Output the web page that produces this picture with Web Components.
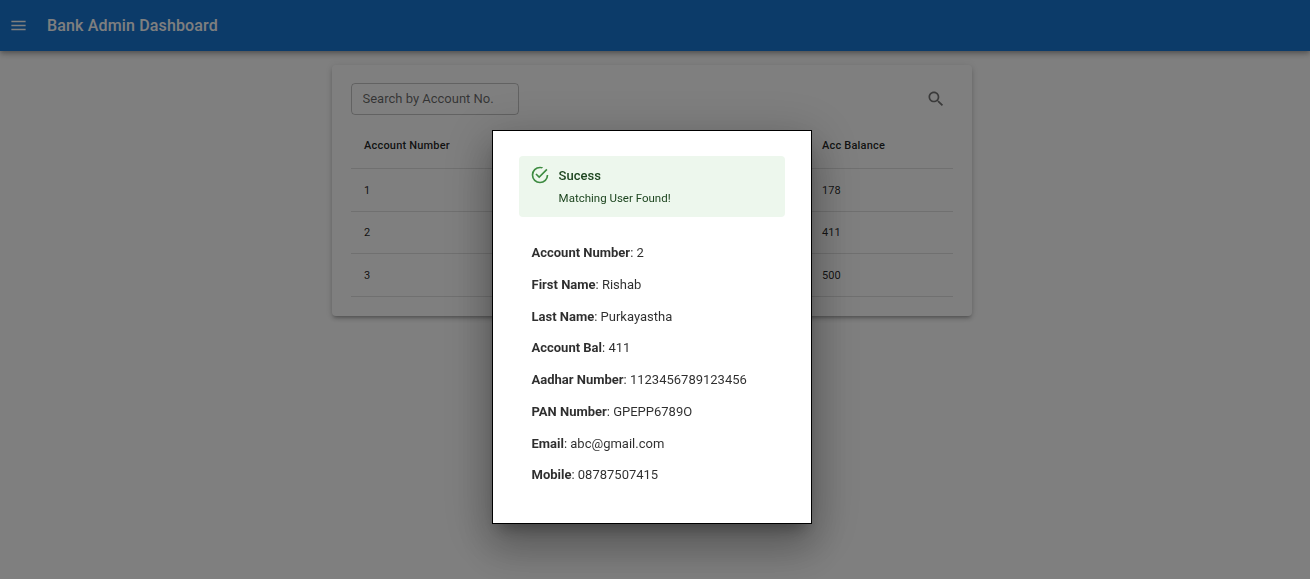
<!DOCTYPE html>
<html>
<head>
<meta charset="utf-8">
<title>Bank Admin Dashboard</title>
<style>
    html, body { margin: 0; height: 100%; }
    body { font-family: Roboto, "Liberation Sans", sans-serif; background: #fff; color: rgba(0,0,0,.87); overflow: hidden; }
</style>
</head>
<body>
<bank-app-bar>Bank Admin Dashboard</bank-app-bar>
<account-card>
    <account-row slot="rows" head number="Account Number" balance="Acc Balance"></account-row>
    <account-row slot="rows" number="1" balance="178"></account-row>
    <account-row slot="rows" number="2" balance="411"></account-row>
    <account-row slot="rows" number="3" balance="500"></account-row>
</account-card>
<user-modal>
    <success-alert slot="alert" heading="Sucess">Matching User Found!</success-alert>
    <detail-line label="Account Number" value="2"></detail-line>
    <detail-line label="First Name" value="Rishab"></detail-line>
    <detail-line label="Last Name" value="Purkayastha"></detail-line>
    <detail-line label="Account Bal" value="411"></detail-line>
    <detail-line label="Aadhar Number" value="1123456789123456"></detail-line>
    <detail-line label="PAN Number" value="GPEPP6789O"></detail-line>
    <detail-line label="Email" value="abc@gmail.com"></detail-line>
    <detail-line label="Mobile" value="08787507415"></detail-line>
</user-modal>

<script>
/**
 * Top application bar
 */
class BankAppBar extends HTMLElement {
    connectedCallback() {
        this.attachShadow({ mode: 'open' });
        this.shadowRoot.innerHTML = `
            <style>
                :host {
                    display: flex;
                    align-items: center;
                    height: 51px;
                    padding-left: 9px;
                    background: #1976d2;
                    color: #fff;
                    box-shadow: 0 2px 4px -1px rgba(0,0,0,.2), 0 4px 5px 0 rgba(0,0,0,.14), 0 1px 10px 0 rgba(0,0,0,.12);
                }
                svg { width: 19px; height: 19px; fill: currentColor; flex: none; }
                h1 { margin: 0 0 0 19px; font-size: 16px; font-weight: 500; line-height: 1; letter-spacing: .15px; }
            </style>
            <svg viewBox="0 0 24 24"><path d="M3 18h18v-2H3v2zm0-5h18v-2H3v2zm0-7v2h18V6H3z"/></svg>
            <h1><slot></slot></h1>
        `;
    }
}

/**
 * Card holding the search field and the accounts table
 */
class AccountCard extends HTMLElement {
    connectedCallback() {
        this.attachShadow({ mode: 'open' });
        this.shadowRoot.innerHTML = `
            <style>
                :host {
                    display: block;
                    box-sizing: border-box;
                    width: 640px;
                    height: 251px;
                    margin: 14px 0 0 332px;
                    padding: 18px 19px 0;
                    border-radius: 4px;
                    background: #fff;
                    box-shadow: 0 3px 3px -2px rgba(0,0,0,.2), 0 3px 4px 0 rgba(0,0,0,.14), 0 1px 8px 0 rgba(0,0,0,.12);
                }
                .search { display: flex; align-items: center; justify-content: space-between; padding-right: 7px; }
                input {
                    box-sizing: border-box;
                    width: 168px;
                    height: 32px;
                    padding: 0 10px 2px 10.5px;
                    border: 1px solid rgba(0,0,0,.23);
                    border-radius: 4px;
                    background: transparent;
                    font: 400 13px Roboto, sans-serif;
                    color: rgba(0,0,0,.87);
                    outline: none;
                }
                input::placeholder { color: rgba(0,0,0,.6); opacity: 1; }
                svg { width: 20px; height: 20px; fill: rgba(0,0,0,.54); display: block; margin: .6px -.2px 0 0; }
            </style>
            <div class="search">
                <input type="text" placeholder="Search by Account No.">
                <svg viewBox="0 0 24 24"><path d="M15.5 14h-.79l-.28-.27C15.41 12.59 16 11.11 16 9.5 16 5.91 13.09 3 9.5 3S3 5.91 3 9.5 5.91 16 9.5 16c1.61 0 3.09-.59 4.23-1.57l.27.28v.79l5 4.99L20.49 19l-4.99-5zm-6 0C7.01 14 5 11.99 5 9.5S7.01 5 9.5 5 14 7.01 14 9.5 11.99 14 9.5 14z"/></svg>
            </div>
            <slot name="rows"></slot>
        `;
    }
}

/**
 * One table row, head attribute makes it the header row
 */
class AccountRow extends HTMLElement {
    connectedCallback() {
        this.attachShadow({ mode: 'open' });
        this.shadowRoot.innerHTML = `
            <style>
                :host {
                    display: grid;
                    grid-template-columns: 1fr 131px;
                    align-items: center;
                    box-sizing: border-box;
                    height: 42.7px;
                    padding: .6px 0 0 13px;
                    border-bottom: 1px solid #e0e0e0;
                    font-size: 11px;
                    letter-spacing: .03px;
                }
                :host([head]) { height: 54px; padding-top: 8px; font-weight: 500; letter-spacing: .2px; }
            </style>
            <span>${this.getAttribute('number')}</span>
            <span>${this.getAttribute('balance')}</span>
        `;
    }
}

/**
 * Backdrop and dialog showing the account that was found
 */
class UserModal extends HTMLElement {
    connectedCallback() {
        this.attachShadow({ mode: 'open' });
        this.shadowRoot.innerHTML = `
            <style>
                :host {
                    position: fixed;
                    left: 0;
                    top: 0;
                    right: 0;
                    bottom: 0;
                    z-index: 1000;
                    display: flex;
                    justify-content: center;
                    align-items: flex-start;
                    box-sizing: border-box;
                    padding: 130px 6px 0 0;
                    background: rgba(0,0,0,.5);
                }
                .dialog {
                    box-sizing: border-box;
                    width: 320px;
                    height: 394px;
                    padding: 25px 26px 0;
                    border: 1px solid #000;
                    background: #fff;
                    box-shadow: 0 11px 15px -7px rgba(0,0,0,.3), 0 24px 38px 3px rgba(0,0,0,.2), 0 9px 46px 8px rgba(0,0,0,.16);
                }
                /* the text in the reference sits on a half pixel and looks soft */
                .lines { padding: 20.4px 0 0 12.5px; filter: blur(.35px); color: rgba(0,0,0,.82); }
            </style>
            <div class="dialog">
                <slot name="alert"></slot>
                <div class="lines"><slot></slot></div>
            </div>
        `;
    }
}

/**
 * Green success message
 */
class SuccessAlert extends HTMLElement {
    connectedCallback() {
        this.attachShadow({ mode: 'open' });
        this.shadowRoot.innerHTML = `
            <style>
                :host {
                    display: flex;
                    box-sizing: border-box;
                    height: 61px;
                    padding: 10px 11px 0;
                    border-radius: 4px;
                    background: #edf7ed;
                    color: #1e4620;
                }
                svg { width: 20px; height: 20px; margin: -1px 8.6px 0 0; fill: #3d8b41; flex: none; }
                .title { font-size: 13px; font-weight: 500; line-height: 20px; }
                .text { margin-top: 3px; font-size: 11.5px; line-height: 18px; }
            </style>
            <svg viewBox="0 0 24 24"><path d="M20,12A8,8 0 0,1 12,20A8,8 0 0,1 4,12A8,8 0 0,1 12,4C12.76,4 13.5,4.11 14.2,4.31L15.77,2.74C14.61,2.26 13.34,2 12,2A10,10 0 0,0 2,12A10,10 0 0,0 12,22A10,10 0 0,0 22,12M7.91,10.08L6.5,11.5L11,16L21,6L19.59,4.58L11,13.17L7.91,10.08Z"/></svg>
            <div>
                <div class="title">${this.getAttribute('heading')}</div>
                <div class="text"><slot></slot></div>
            </div>
        `;
    }
}

/**
 * Label and value line in the dialog
 */
class DetailLine extends HTMLElement {
    connectedCallback() {
        this.attachShadow({ mode: 'open' });
        this.shadowRoot.innerHTML = `
            <style>
                :host { display: block; height: 31.7px; line-height: 31.7px; font-size: 13px; }
                b { font-weight: 700; }
            </style>
            <b>${this.getAttribute('label')}</b>: ${this.getAttribute('value')}
        `;
    }
}

customElements.define('bank-app-bar', BankAppBar);
customElements.define('account-card', AccountCard);
customElements.define('account-row', AccountRow);
customElements.define('user-modal', UserModal);
customElements.define('success-alert', SuccessAlert);
customElements.define('detail-line', DetailLine);
</script>
</body>
</html>
